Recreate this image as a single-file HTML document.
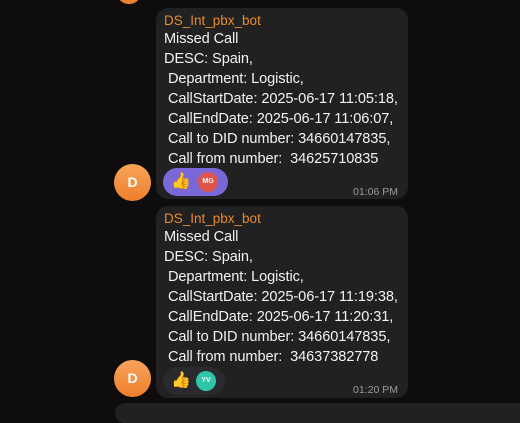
<html><head><style>
body{margin:0;width:520px;height:410px;background:#0e0c0c;overflow:hidden;font-family:"Liberation Sans",sans-serif;position:relative}
.b{position:absolute;left:156px;width:252px;background:#212121;border-radius:12px}
.n{position:absolute;left:8px;top:5px;color:#e98a2e;font-size:13.5px}
.t{position:absolute;left:8px;top:21px;color:#f2f2f2;font-size:14.6px;line-height:20px;white-space:pre;letter-spacing:-0.1px}
.av{position:absolute;left:114px;width:37px;height:37px;border-radius:50%;background:linear-gradient(#f8a35a,#ee7f2c);color:#fff;font-weight:bold;font-size:14px;text-align:center;line-height:37px}
.r{position:absolute;left:7px;top:160px;height:28px;border-radius:14px}
.tm{position:absolute;right:10px;top:178px;color:#9a9a9a;font-size:10.5px}
.c{position:absolute;top:4px;width:20px;height:20px;border-radius:50%;color:#fff;font-size:7px;font-weight:bold;text-align:center;line-height:20px}
.th{position:absolute;left:8px;top:3px;font-size:16px;color:#f5b82e}
</style></head><body>
<div style="position:absolute;left:118px;top:-14px;width:22px;height:18px;border-radius:50%;background:#ee7f2c"></div>
<div class="b" style="top:8px;height:191px">
<div class="n">DS_Int_pbx_bot</div>
<div class="t">Missed Call
DESC: Spain,
 Department: Logistic,
 CallStartDate: 2025-06-17 11:05:18,
 CallEndDate: 2025-06-17 11:06:07,
 Call to DID number: 34660147835,
 Call from number:  34625710835</div>
<div class="r" style="width:65px;background:#7b68d8"><span class="th">👍</span><div class="c" style="left:35px;background:#e0554a">MG</div></div>
<div class="tm">01:06 PM</div>
</div>
<div class="av" style="top:164px">D</div>
<div class="b" style="top:206px;height:192px">
<div class="n">DS_Int_pbx_bot</div>
<div class="t">Missed Call
DESC: Spain,
 Department: Logistic,
 CallStartDate: 2025-06-17 11:19:38,
 CallEndDate: 2025-06-17 11:20:31,
 Call to DID number: 34660147835,
 Call from number:  34637382778</div>
<div class="r" style="width:62px;background:#2a2a2e;top:161px"><span class="th">👍</span><div class="c" style="left:33px;background:#2fc6a8">YV</div></div>
<div class="tm">01:20 PM</div>
</div>
<div class="av" style="top:360px">D</div>
<div style="position:absolute;left:115px;top:403px;width:420px;height:20px;background:#212121;border-radius:12px"></div>
</body></html>
